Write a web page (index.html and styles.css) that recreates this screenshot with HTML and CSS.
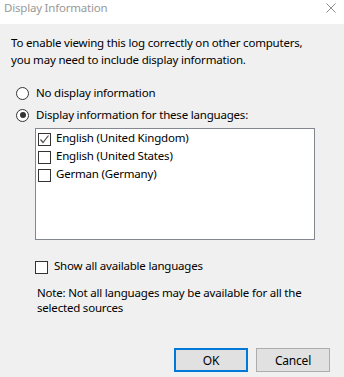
FILE: index.html
```html
<!DOCTYPE html>
<html lang="en">
<head>
  <meta charset="UTF-8" />
  <meta name="viewport" content="width=device-width, initial-scale=1.0"/>
  <title>Display Information</title>
  <link rel="stylesheet" href="styles.css">
</head>
<body>
  <div class="window">
    <div class="titlebar">
      <span class="title">Display Information</span>
      <svg class="close" width="10" height="10" viewBox="0 0 10 10">
        <path d="M0.5 0.5 L9.5 9.5 M9.5 0.5 L0.5 9.5" stroke="#8c8c8c" stroke-width="1" fill="none"/>
      </svg>
    </div>

    <div class="content">
      <p class="intro">To enable viewing this log correctly on other computers,<br>you may need to include display information.</p>

      <div class="options">
        <label class="radio"><span class="dot"></span>No display information</label>
        <label class="radio checked"><span class="dot"></span>Display information for these languages:</label>
      </div>

      <div class="list">
        <div class="item">
          <span class="box checked">
            <svg width="11" height="11" viewBox="0 0 11 11"><path d="M1.5 5.5 L4 8.5 L9.5 1.5" stroke="#4d4d4d" stroke-width="1.2" fill="none"/></svg>
          </span>
          English (United Kingdom)
        </div>
        <div class="item"><span class="box"></span>English (United States)</div>
        <div class="item"><span class="box"></span>German (Germany)</div>
      </div>

      <label class="show-all"><span class="box"></span>Show all available languages</label>

      <p class="note">Note: Not all languages may be available for all the<br>selected sources</p>

      <div class="buttons">
        <button class="btn default">OK</button>
        <button class="btn">Cancel</button>
      </div>
    </div>
  </div>
</body>
</html>
```

FILE: styles.css
```css
body {
  margin: 0;
  font-family: "Noto Sans", "Open Sans", sans-serif;
  font-size: 11.5px;
  letter-spacing: -0.2px;
  color: #000;
  background-color: #f0f0f0;
}

.window {
  width: 344px;
  height: 377px;
  background-color: #f0f0f0;
  overflow: hidden;
}

.titlebar {
  height: 24px;
  background-color: white;
  display: flex;
  justify-content: space-between;
  align-items: flex-start;
}

.title {
  color: #999;
  line-height: 16px;
  padding: 0 0 0 4px;
}

.close {
  margin: 3px 8px 0 0;
}

.content {
  padding: 10px 0 0 11px;
}

.intro {
  margin: 0;
  line-height: 17px;
}

.options {
  margin-top: 14px;
  padding-left: 5px;
}

.radio {
  display: flex;
  align-items: center;
  height: 22px;
  line-height: 22px;
}

.dot {
  width: 11px;
  height: 11px;
  border: 1px solid #333;
  border-radius: 50%;
  background-color: white;
  margin-right: 7px;
  display: flex;
  align-items: center;
  justify-content: center;
}

.radio.checked .dot::after {
  content: "";
  width: 6px;
  height: 6px;
  border-radius: 50%;
  background-color: #333;
}

.list {
  box-sizing: border-box;
  margin: 2px 0 0 24px;
  width: 280px;
  height: 112px;
  border: 1px solid #828790;
  background-color: white;
  padding-left: 2px;
}

.item {
  display: flex;
  align-items: flex-start;
  height: 18px;
  line-height: 18px;
}

.box {
  box-sizing: border-box;
  width: 13px;
  height: 13px;
  border: 1px solid #333;
  background-color: white;
  margin: 4px 5px 0 0;
  display: flex;
  align-items: center;
  justify-content: center;
  flex-shrink: 0;
}

.show-all {
  display: flex;
  align-items: flex-start;
  height: 18px;
  line-height: 18px;
  margin: 17px 0 0 24px;
}

.show-all .box {
  margin-right: 6px;
}

.note {
  margin: 10px 0 0 26px;
  line-height: 15px;
}

.buttons {
  display: flex;
  justify-content: flex-end;
  gap: 8px;
  margin-top: 33px;
  padding-right: 14px;
}

.btn {
  box-sizing: border-box;
  width: 74px;
  height: 24px;
  font-family: inherit;
  font-size: 12px;
  letter-spacing: -0.2px;
  color: #000;
  background-color: #e1e1e1;
  border: 1px solid #adadad;
  border-radius: 0;
  padding: 0;
}

.btn.default {
  border: 2px solid #0078d7;
}
```
